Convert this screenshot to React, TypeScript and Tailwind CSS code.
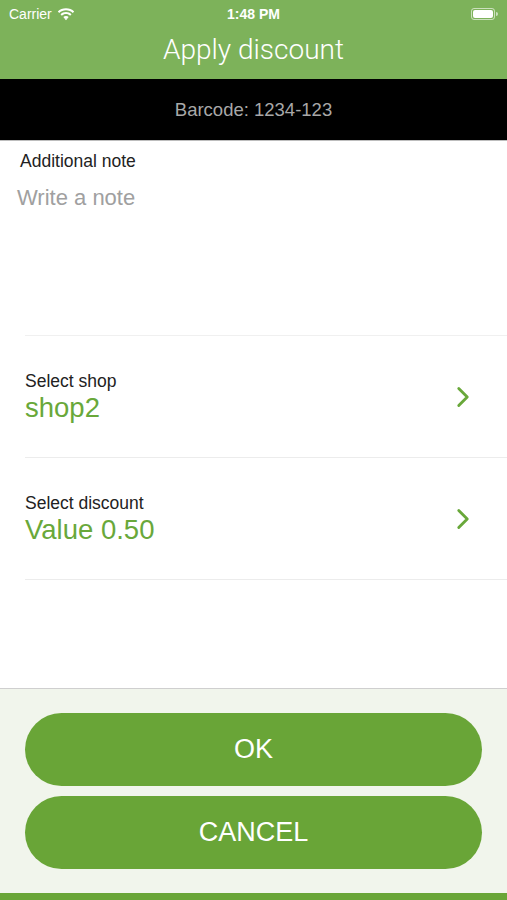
import { ChevronRight } from "lucide-react";

const font = { fontFamily: "'Liberation Sans', Arial, sans-serif" };

function Wifi() {
  return (
    <svg width="18" height="13" viewBox="0 0 18 13" fill="white">
      <path d="M9 2.2c2.6 0 5 1 6.8 2.7l1.4-1.5C15.1 1.4 12.2.2 9 .2S2.9 1.4.8 3.4l1.4 1.5C4 3.2 6.4 2.2 9 2.2z" />
      <path d="M9 6.1c1.6 0 3 .6 4.1 1.6l1.4-1.5C13.1 4.9 11.1 4.1 9 4.1s-4.1.8-5.5 2.1l1.4 1.5C6 6.7 7.4 6.1 9 6.1z" />
      <path d="M9 9.9c.6 0 1.2.2 1.6.6L9 12.2l-1.6-1.7c.4-.4 1-.6 1.6-.6z" />
      <path d="M9 8c1.1 0 2 .4 2.7 1.1L10.3 10.6C9.9 10.2 9.5 10 9 10s-.9.2-1.3.6L6.3 9.1C7 8.4 7.9 8 9 8z" />
    </svg>
  );
}

function SelectRow({ label, value }: { label: string; value: string }) {
  return (
    <div className="ml-[25px] flex h-[122px] items-center border-b border-[#ececec] pr-[27px]">
      <div className="flex-1">
        <div className="text-[17.5px] leading-[22px] text-[#222]">{label}</div>
        <div className="text-[27.5px] leading-[32px] text-[#69a83a]">{value}</div>
      </div>
      <ChevronRight size={34} strokeWidth={2} className="text-[#69a83a]" />
    </div>
  );
}

export default function App() {
  return (
    <div className="flex h-[900px] w-[507px] flex-col bg-white" style={font}>
      {/* Nav bar */}
      <div className="h-[79px] bg-[#7db25a] text-white">
        <div className="flex h-[28px] items-center justify-between px-[9px]">
          <div className="flex w-[120px] items-center gap-[5px] text-[14px]">
            <span>Carrier</span>
            <Wifi />
          </div>
          <div className="text-[14px] font-bold">1:48 PM</div>
          <div className="flex w-[120px] justify-end">
            <div className="flex items-center">
              <div className="h-[12px] w-[24px] rounded-[3px] border border-white/60 p-[1px]">
                <div className="h-full w-full rounded-[2px] bg-white" />
              </div>
              <div className="ml-[1px] h-[4px] w-[2px] rounded-r bg-white/60" />
            </div>
          </div>
        </div>
        <div
          className="text-center text-[28px] font-light leading-[44px]"
          style={{ fontFamily: "Roboto, 'Liberation Sans', sans-serif" }}
        >
          Apply discount
        </div>
      </div>

      {/* Barcode bar */}
      <div className="flex h-[61px] items-center justify-center bg-black text-[18.5px] text-[#a8a8a8]">
        Barcode: 1234-123
      </div>

      {/* Content */}
      <div className="flex-1 border-t border-[#bdbdbd]">
        <div className="ml-[25px] h-[195px] border-b border-[#f0f0f0]">
          <div className="-ml-[5px] pt-[9px] text-[17.5px] leading-[22px] text-[#222]">Additional note</div>
          <div className="-ml-[8px] pt-[13px] text-[22px] leading-[26px] text-[#a0a0a0]">Write a note</div>
        </div>
        <SelectRow label="Select shop" value="shop2" />
        <SelectRow label="Select discount" value="Value 0.50" />
      </div>

      {/* Buttons */}
      <div className="flex h-[205px] flex-col gap-[10px] border-t border-[#cfcfcf] bg-[#f1f5ec] px-[25px] pt-[24px]">
        <button className="h-[73px] rounded-full bg-[#69a537] text-[27px] text-white">OK</button>
        <button className="h-[73px] rounded-full bg-[#69a537] text-[27px] text-white">CANCEL</button>
      </div>
      <div className="h-[7px] bg-[#69a537]" />
    </div>
  );
}
